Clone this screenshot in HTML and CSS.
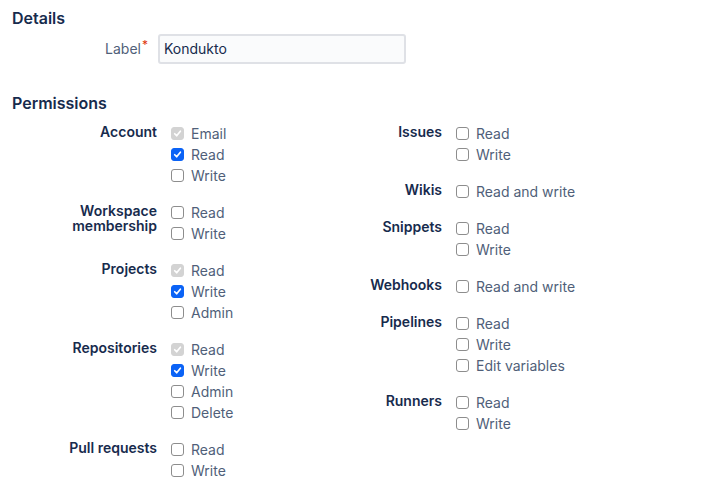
FILE: index.html
```html
<!DOCTYPE html>
<html>
<head>
<meta charset="utf-8">
<link rel="stylesheet" href="styles.css">
</head>
<body>
<h2 class="heading">Details</h2>
<div class="field-row">
  <label class="field-label">Label<span class="req">*</span></label>
  <div class="text-input">Kondukto</div>
</div>

<h2 class="heading heading-perm">Permissions</h2>
<div class="perm-columns">
  <div class="perm-col">
    <div class="group">
      <div class="glabel">Account</div>
      <ul class="opts">
        <li><span class="cb disabled"><svg viewBox="0 0 13 13"><path d="M3.2 6.8l2.3 2.4 4.4-5.4" /></svg></span>Email</li>
        <li><span class="cb checked"><svg viewBox="0 0 13 13"><path d="M3.2 6.8l2.3 2.4 4.4-5.4" /></svg></span>Read</li>
        <li><span class="cb"></span>Write</li>
      </ul>
    </div>
    <div class="group">
      <div class="glabel">Workspace membership</div>
      <ul class="opts">
        <li><span class="cb"></span>Read</li>
        <li><span class="cb"></span>Write</li>
      </ul>
    </div>
    <div class="group">
      <div class="glabel">Projects</div>
      <ul class="opts">
        <li><span class="cb disabled"><svg viewBox="0 0 13 13"><path d="M3.2 6.8l2.3 2.4 4.4-5.4" /></svg></span>Read</li>
        <li><span class="cb checked"><svg viewBox="0 0 13 13"><path d="M3.2 6.8l2.3 2.4 4.4-5.4" /></svg></span>Write</li>
        <li><span class="cb"></span>Admin</li>
      </ul>
    </div>
    <div class="group">
      <div class="glabel">Repositories</div>
      <ul class="opts">
        <li><span class="cb disabled"><svg viewBox="0 0 13 13"><path d="M3.2 6.8l2.3 2.4 4.4-5.4" /></svg></span>Read</li>
        <li><span class="cb checked"><svg viewBox="0 0 13 13"><path d="M3.2 6.8l2.3 2.4 4.4-5.4" /></svg></span>Write</li>
        <li><span class="cb"></span>Admin</li>
        <li><span class="cb"></span>Delete</li>
      </ul>
    </div>
    <div class="group">
      <div class="glabel">Pull requests</div>
      <ul class="opts">
        <li><span class="cb"></span>Read</li>
        <li><span class="cb"></span>Write</li>
      </ul>
    </div>
  </div>
  <div class="perm-col">
    <div class="group">
      <div class="glabel">Issues</div>
      <ul class="opts">
        <li><span class="cb"></span>Read</li>
        <li><span class="cb"></span>Write</li>
      </ul>
    </div>
    <div class="group">
      <div class="glabel">Wikis</div>
      <ul class="opts">
        <li><span class="cb"></span>Read and write</li>
      </ul>
    </div>
    <div class="group">
      <div class="glabel">Snippets</div>
      <ul class="opts">
        <li><span class="cb"></span>Read</li>
        <li><span class="cb"></span>Write</li>
      </ul>
    </div>
    <div class="group">
      <div class="glabel">Webhooks</div>
      <ul class="opts">
        <li><span class="cb"></span>Read and write</li>
      </ul>
    </div>
    <div class="group">
      <div class="glabel">Pipelines</div>
      <ul class="opts">
        <li><span class="cb"></span>Read</li>
        <li><span class="cb"></span>Write</li>
        <li><span class="cb"></span>Edit variables</li>
      </ul>
    </div>
    <div class="group">
      <div class="glabel">Runners</div>
      <ul class="opts">
        <li><span class="cb"></span>Read</li>
        <li><span class="cb"></span>Write</li>
      </ul>
    </div>
  </div>
</div>
</body>
</html>
```

FILE: styles.css
```css
* { box-sizing: border-box; }
html, body { background: #ffffff; }
body {
  margin: 0;
  padding: 0 12px;
  font-family: Inter, "Noto Sans", "Liberation Sans", sans-serif;
  font-size: 14px;
  color: #172B4D;
}
.heading {
  margin: 8px 0 0;
  font-size: 16px;
  line-height: 20px;
  font-weight: 600;
  color: #172B4D;
}
.heading-perm {
  margin-top: 29px;
}
.field-row {
  display: grid;
  grid-template-columns: 135px 248px;
  column-gap: 11px;
  align-items: center;
  margin-top: 6px;
}
.field-label {
  justify-self: end;
  color: #505F79;
  font-size: 14px;
  line-height: 20px;
  position: relative;
  padding-right: 6px;
}
.req {
  position: absolute;
  right: -1px;
  top: -4px;
  color: #DE350B;
  font-size: 12px;
}
.text-input {
  height: 30px;
  border: 2px solid #DFE1E6;
  border-radius: 3px;
  background: #FAFBFC;
  padding: 0 4px;
  line-height: 26px;
  color: #172B4D;
}
.perm-columns {
  display: grid;
  grid-template-columns: 285px 1fr;
  margin-top: 9px;
}
.group {
  display: grid;
  grid-template-columns: 145px 1fr;
  column-gap: 14px;
  margin-bottom: 16px;
}
.glabel {
  text-align: right;
  font-weight: 600;
  line-height: 15px;
  padding-top: 2px;
  color: #172B4D;
}
.opts {
  list-style: none;
  margin: 0;
  padding: 0;
}
.opts li {
  display: flex;
  align-items: center;
  height: 21px;
  color: #505F79;
  line-height: 21px;
  padding-top: 2px;
}
.cb {
  flex: none;
  width: 13px;
  height: 13px;
  margin-right: 7px;
  border: 1px solid #8D8D8D;
  border-radius: 3px;
  background: #fff;
  display: flex;
  align-items: center;
  justify-content: center;
}
.cb svg {
  width: 13px;
  height: 13px;
  fill: none;
  stroke: #fff;
  stroke-width: 2;
  stroke-linecap: round;
  stroke-linejoin: round;
}
.cb.checked {
  background: #0B63F6;
  border-color: #0B63F6;
}
.cb.disabled {
  background: #D3D3D3;
  border-color: #D3D3D3;
}
```
